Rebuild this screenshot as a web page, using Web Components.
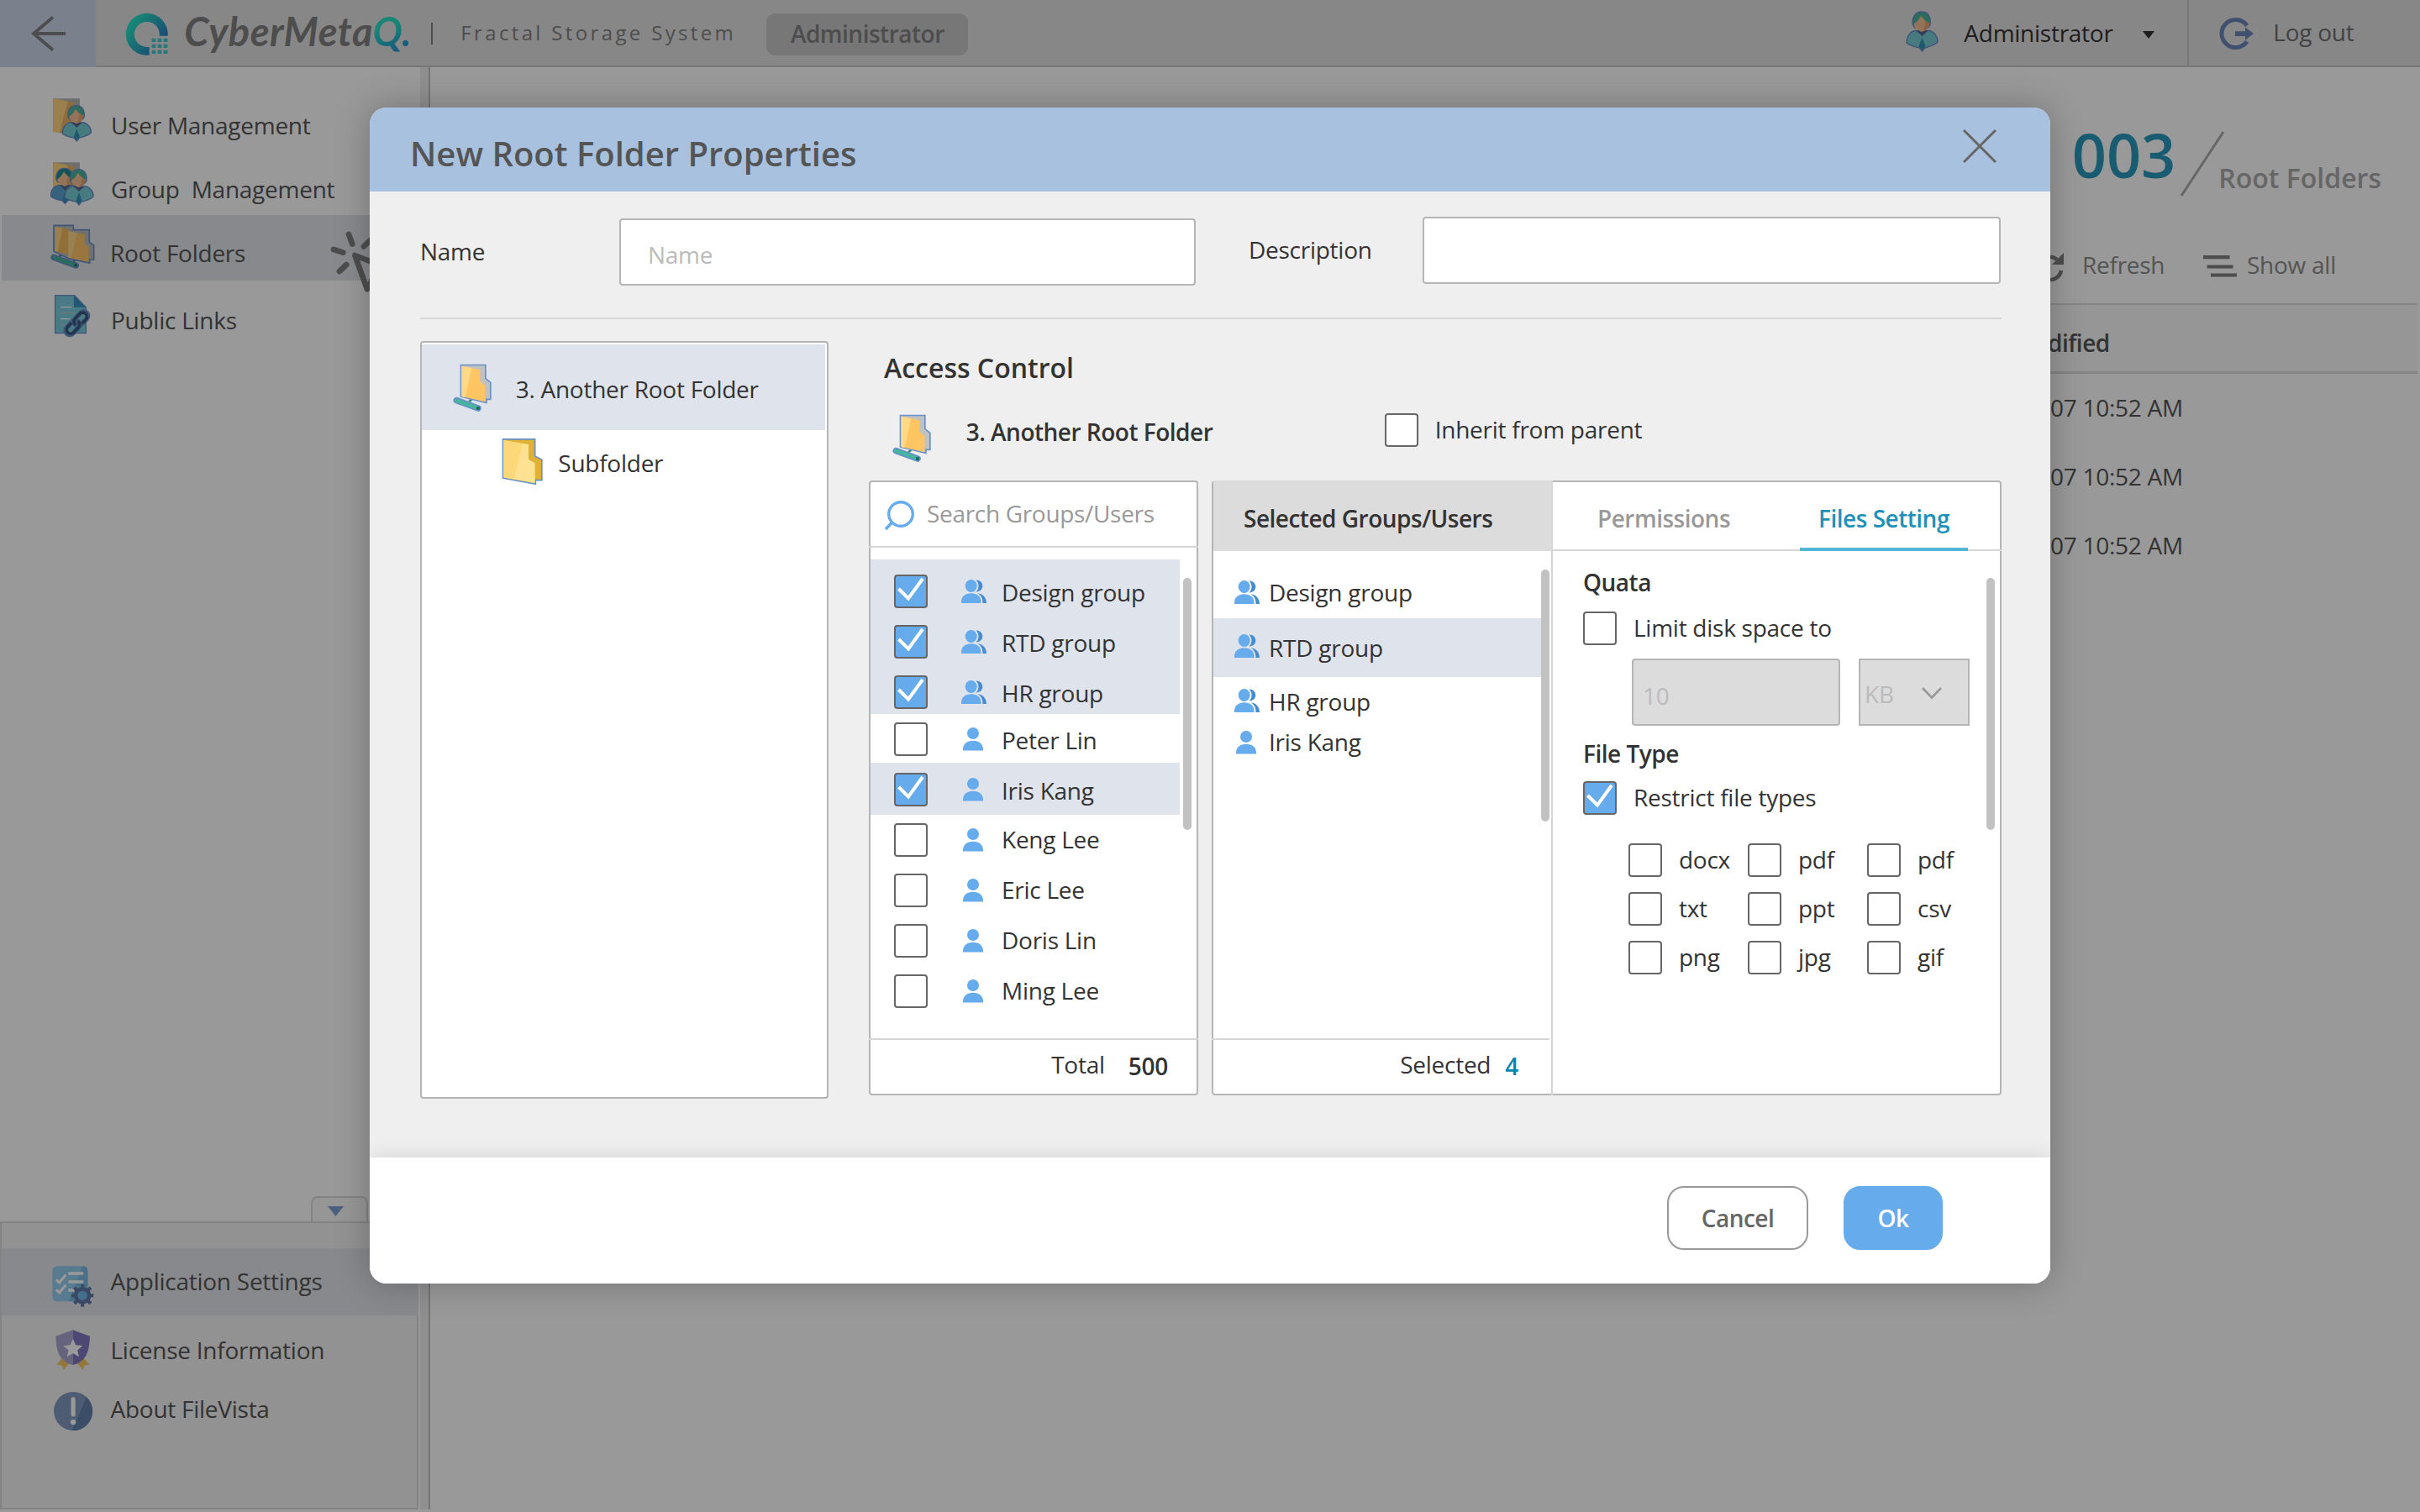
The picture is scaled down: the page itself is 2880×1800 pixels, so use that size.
<!DOCTYPE html>
<html lang="en">
<head>
<meta charset="utf-8">
<title>CyberMetaQ – Root Folders</title>
<style>
  html, body { margin: 0; padding: 0; }
  body { width: 2880px; height: 1800px; overflow: hidden; background: #fff; font-family: "Open Sans", "Noto Sans", sans-serif; font-size: 28px; line-height: 38px; letter-spacing: -.26px; color: #333; }
</style>
</head>
<body>
<app-shell>
  <top-bar slot="top"></top-bar>
  <side-nav slot="side"></side-nav>
  <root-content slot="main"></root-content>
  <props-dialog slot="dialog" heading="New Root Folder Properties"></props-dialog>
</app-shell>

<script>
const person = (dx, dy, body, hair) => `
  <g transform="translate(${dx} ${dy})">
    <path d="M223 207C223 184 236 170 252 167L274 180L296 167C313 170 326 186 325 205C312 216 292 220 283 223L274 234L265 223C250 220 232 216 223 207z" fill="${body}" stroke="#6b8fc9" stroke-width="4" stroke-linejoin="round"/>
    <path d="M255 166L274 186L293 166z" fill="#56688f"/>
    <path d="M274 190L285 218L274 231L263 218z" fill="#3595bb"/>
    <path d="M243 148C240 121 254 107 272 107C292 107 305 122 300 150L293 158H250z" fill="${hair}" stroke="#6b8fc9" stroke-width="4"/>
    <path d="M247 146C256 140 264 132 270 119C278 131 287 139 298 143C299 153 292 160 286 166L272 172L256 163C249 158 247 152 247 146z" fill="#f5c096"/>
    <path d="M284 137L298 143C299 153 292 160 286 166L278 170z" fill="#e8a378"/>
  </g>`;
const backFolder = (y) => `
  <g transform="translate(0 ${y})">
    <path d="M190 82H285V190H190z" fill="#b8b8b8"/>
    <path d="M190 82L266 96V214L190 200z" fill="#e9b265"/>
    <path d="M190 82L243 92L212 204L190 200z" fill="#ffd580"/>
  </g>`;

/* name: [viewBox, width, height, markup] */
const ICONS = {
  back: ['0 0 42 42', 42, 42, `<path d="M26 1.500L3 21L26 40.500M2 21H41" fill="none" stroke="#808080" stroke-width="3.800"/>`],
  logo: ['448 46 154 154', 51.33, 51.33, `
    <defs><linearGradient id="g" gradientUnits="userSpaceOnUse" x1="470" y1="90" x2="570" y2="160"><stop offset="0" stop-color="#28e0c6"/><stop offset=".45" stop-color="#2cb5c2"/><stop offset="1" stop-color="#2a82c4"/></linearGradient></defs>
    <path d="M600 129A75 75 0 1 0 534 198V168A45 45 0 1 1 570 129z" fill="url(#g)"/>
    <path d="M543 138h14v13h-14zM564 138h14v13h-14zM585 138h14v13h-14zM543 159h14v13h-14zM564 159h14v13h-14zM585 159h14v13h-14zM543 180h14v13h-14zM564 180h14v13h-14zM585 180h14v13h-14z" fill="#45c6cd"/>`],
  avatar: ['220 104 108 134', 39, 49.5, person(0, 0, '#79cdd6', '#4bb39b')],
  logout: ['0 0 42 38', 42, 38, `<path d="M34 9.500A16.500 16.500 0 1 0 34 28.500" fill="none" stroke="#6c87b9" stroke-width="5"/><path d="M20 16.200H32V11.500L42 19L32 26.800V22H20z" fill="#6c87b9"/>`],
  user: ['186 78 144 162', 48, 54, backFolder(0) + person(0, 0, '#79cdd6', '#4bb39b')],
  group: ['180 306 156 162', 52, 54, backFolder(228) + person(-42, 224, '#5aa4cf', '#1f8a8f') + person(8, 228, '#79cdd6', '#4bb39b')],
  roots: ['176 528 160 162', 53.33, 54, `
    <path d="M207 648L226 630M252 672L268 654" stroke="#2b8a7a" stroke-width="7"/>
    <path d="M188 535H258V551H315V595L331 606V657H316V670L240 653L188 628z" fill="#bcbcbc" stroke="#6b8fc9" stroke-width="5"/>
    <path d="M192 540L242 548V640L192 627z" fill="#f2bb5c"/><path d="M192 540L219 545L201 629L192 627z" fill="#ffd580"/>
    <path d="M240 555L298 568V602L313 612V665L240 650z" fill="#ffc566"/><path d="M240 555L270 562L250 652L240 650z" fill="#ffd890"/>
    <path d="M188 649L267 678" stroke="#6b8fc9" stroke-width="22" stroke-linecap="round"/><path d="M188 649L267 678" stroke="#46b59d" stroke-width="12" stroke-linecap="round"/><circle cx="266" cy="677" r="5" fill="#1a6b5e"/>`],
  link: ['192 780 132 156', 44, 52, `
    <path d="M197 785H266L307 828V920H197z" fill="#79cdda" stroke="#6b8fc9" stroke-width="4"/><path d="M264 786V827H306z" fill="#3a93c4"/>
    <path d="M216 827H256M216 869H250" stroke="#fff" stroke-width="4"/><path d="M216 848H270M216 890H236" stroke="#b9c2c6" stroke-width="4"/>
    <g fill="none" stroke="#6b8fc9" stroke-width="17"><rect x="-29" y="-15" width="58" height="30" rx="15" transform="translate(289 868) rotate(-47)"/><rect x="-29" y="-15" width="58" height="30" rx="15" transform="translate(259 900) rotate(-47)"/></g>
    <g fill="none" stroke="#38597f" stroke-width="10.500"><path d="M-7 15H12A15 15 0 0 0 12 -15H-12A15 15 0 0 0 -27 2" transform="translate(287 870) rotate(-47)"/><path d="M7 -15H-12A15 15 0 0 0 -12 15H12A15 15 0 0 0 27 -2" transform="translate(261 898) rotate(-47)"/></g>`],
  click: ['1180 556 222 222', 74, 74, `<g fill="none" stroke="#808080" stroke-width="20" stroke-linecap="round" stroke-linejoin="round"><path d="M1246 568L1259 603M1192 622L1226 633M1238 676L1213 700M1300 611L1326 586"/><path d="M1268 643L1312 764L1336 716L1388 690z"/></g>`],
  settings: ['176 378 150 152', 51.65, 50.67, `
    <rect x="180" y="382" width="122" height="126" rx="16" fill="#93cdf0"/><path d="M286 382Q302 384 302 398V492Q302 508 286 508H236z" fill="#7db9e0"/>
    <path d="M193 430L204 441L226 413M193 466L204 477L226 449" fill="none" stroke="#fff" stroke-width="9"/><path d="M235 408H287M235 438H287M235 468H256" stroke="#fff" stroke-width="10"/>
    <g fill="#5f7aa8"><circle cx="284" cy="487" r="30"/><rect x="278" y="447" width="12" height="80"/><rect x="246" y="481" width="76" height="12"/><rect x="278" y="447" width="12" height="80" transform="rotate(45 284 487)"/><rect x="278" y="447" width="12" height="80" transform="rotate(-45 284 487)"/></g><circle cx="284" cy="487" r="17" fill="#72b8e8"/>`],
  license: ['188 607 126 150', 43.4, 50, `
    <path d="M215 710L195 735L212 737L219 753L238 731zM288 710L309 735L292 737L286 753L266 731z" fill="#f2c765"/>
    <path d="M251 611L192 633C193 690 206 723 251 736z" fill="#a9a6d0"/><path d="M251 611L310 633C308 690 296 723 251 736z" fill="#8078c0"/>
    <path d="M251.500 642L261 665L285 667L267 683L272 707L251.500 694L231 707L236 683L218 667L242 665z" fill="#fff"/>`],
  about: ['180 828 140 144', 48.2, 48, `
    <ellipse cx="250" cy="900" rx="67" ry="69" fill="#8099bf"/><path d="M296 850A67 69 0 0 1 246 969z" fill="#6480ad"/><path d="M250 857V912" stroke="#fff" stroke-width="15" stroke-linecap="round"/><ellipse cx="250" cy="939" rx="9.500" ry="9.500" fill="#fff"/>`],
  refresh: ['0 0 34 34', 34, 34, `<path d="M26 8A13.500 13.500 0 1 0 31 21" fill="none" stroke="#808080" stroke-width="4.500"/><path d="M34 0V14H20z" fill="#808080"/>`],
  lines: ['0 0 40 27', 40, 27, `<path d="M0 2.200H31.500M4.500 13.500H35.500M9 23.500H40" stroke="#808080" stroke-width="4.200"/>`],
  slash: ['0 0 54 78', 54, 78, `<path d="M52 1L2 77" stroke="#aaa" stroke-width="3"/>`],
  root: ['118 99 140 172', 46.67, 57.33, `
    <path d="M172 239L190 221" stroke="#2b8a7a" stroke-width="8"/>
    <path d="M146.500 103.500H234.500V152L252.500 166V226H237.500V238L146.500 216z" fill="#c1c1c1" stroke="#6791c8" stroke-width="5"/>
    <path d="M149 107L215 121V163L233 177V235L149 216z" fill="#ffc563"/><path d="M149 107L185 115L162 219L149 216z" fill="#ffd986"/>
    <path d="M131 230L208 258" stroke="#6791c8" stroke-width="23" stroke-linecap="round"/><path d="M131 230L208 258" stroke="#46b59d" stroke-width="13" stroke-linecap="round"/><circle cx="208" cy="258" r="6.500" fill="#1d6a60"/>`],
  sub: ['292 364 148 172', 49.33, 57.33, `
    <path d="M296.500 369.500H411V430L435.500 443V516H413V530L296.500 508z" fill="#dfb135" stroke="#6791c8" stroke-width="5"/>
    <path d="M299 373L388 388V442L411 455V527L299 506z" fill="#fee292"/><path d="M299 373L367 385L335 513L299 506z" fill="#fdd879"/>`],
  close: ['0 0 40 40', 40, 40, `<path d="M1 1L39 39M39 1L1 39" stroke="#666" stroke-width="3"/>`],
  search: ['0 0 35 36', 35, 36, `<circle cx="19" cy="16" r="14.300" fill="none" stroke="#66abec" stroke-width="3.400"/><path d="M8.500 26L1 34" stroke="#66abec" stroke-width="3.400"/>`],
  people: ['0 0 30 28', 30, 28, `<path d="M17.500 .4C22 .2 25.300 3.500 25.300 7.500S22 14.600 17.500 14.400C21.500 11 21.500 4 17.500 .4zM19.500 16.200C26.500 17 30 22 30 28H25.500C25.500 22 23.500 18.500 19.500 16.200z" fill="#458bd0"/><ellipse cx="11.700" cy="7.500" rx="7" ry="7.400" fill="#66abec"/><path d="M0 28V26.500C0 20 5 16.300 11.800 16.300S23.500 20 23.500 26.500V28z" fill="#66abec"/>`],
  one: ['-2 0 30 28', 30, 28, `<ellipse cx="12" cy="7" rx="7" ry="7" fill="#66abec"/><path d="M0 27.500V26C0 19.500 5 15.700 12 15.700S24 19.500 24 26V27.500z" fill="#66abec"/>`],
  chevron: ['0 0 24 15', 24, 15, `<path d="M1 1L12 12.500L23 1" fill="none" stroke="#999" stroke-width="2.600"/>`],
  caret: ['0 0 14 9', 14, 9, `<path d="M0 0H14L7 9z" fill="#333"/>`],
  caretBlue: ['0 0 19 12', 19, 12, `<path d="M0 0H19L9.500 12z" fill="#7fa2d5"/>`],
  tick: ['0 0 40 40', 40, 40, `<path d="M5.500 17L17 28.500L34 5" fill="none" stroke="#fff" stroke-width="4"/>`],
};

const define = (name, css, html) => customElements.define(name, class extends HTMLElement {
  connectedCallback() {
    if (this.shadowRoot) return;
    const root = this.attachShadow({ mode: 'open' });
    root.innerHTML = `<style>:host{display:block;box-sizing:border-box}*{box-sizing:border-box}${css}</style>` +
      (typeof html === 'function' ? html(this) : html);
  }
});

define('app-icon', ':host{display:block;flex:none;line-height:0}svg{display:block}', el => {
  const [box, w, h, body] = ICONS[el.getAttribute('name')];
  return `<svg viewBox="${box}" width="${w}" height="${h}" preserveAspectRatio="none">${body}</svg>`;
});

define('check-box', `
  :host{flex:none;width:40px;height:40px;border:2px solid #666;border-radius:4px;background:#fff;overflow:hidden}
  :host([checked]){background:#66abec}
  app-icon{margin:-2px}`,
  el => el.hasAttribute('checked') ? '<app-icon name="tick"></app-icon>' : '');

define('scroll-thumb', ':host{flex:none;width:10px;height:300px;border-radius:5px;background:#c2c2c2}', '');

define('app-shell', `
  :host{position:relative;display:grid;grid-template:80px 1720px / 512px 2368px;width:2880px;height:1800px;overflow:hidden}
  .top{grid-column:1/3}
  .veil{position:absolute;inset:0;background:rgba(0,0,0,.4);padding:128px 440px 272px}`,
  `<div class="top"><slot name="top"></slot></div><slot name="side"></slot><slot name="main"></slot>
   <div class="veil"><slot name="dialog"></slot></div>`);

define('top-bar', `
  :host{display:flex;height:80px;background:#e2e2e2}
  .back{width:114px;background:#cbd5e9;padding:19px 0 0 37px}
  .bar{flex:1;display:flex;border-bottom:2px solid #c6c6c6}
  .logo{margin:15px 0 0 35px}
  .brand{margin:0 0 0 19px;font:italic 700 47px/54px Lato,sans-serif;color:#808080;padding-top:10px;white-space:nowrap;height:76px;width:267px;letter-spacing:.45px}
  .brand b{font-weight:700;background:linear-gradient(160deg,#28e0c6 35%,#2a8ad0 80%);-webkit-background-clip:text;background-clip:text;color:transparent;padding:0 4px 8px 0}
  .sep{width:2px;height:26px;background:#808080;margin:27px 0 0 27px}
  .sys{margin:20px 0 0 33px;font-size:24px;line-height:38px;letter-spacing:3.35px;color:#808080;width:364px;white-space:nowrap}
  .badge{margin-top:16px;width:240px;height:50px;border-radius:10px;background:#c6c6c6;color:#808080;font-weight:600;letter-spacing:-.5px;text-align:center;line-height:48px}
  .avatar{margin:13px 0 0 1116px}
  .name{margin:20px 0 0 30px;width:213px;color:#333}
  .caret{margin-top:37px}
  .out{display:flex;border-left:2px solid #c6c6c6;margin-left:39px;padding-left:35px;color:#6f6f6f}
  .out app-icon{margin-top:21px}.out span{margin:19px 0 0 23px}`,
  `<div class="back"><app-icon name="back"></app-icon></div>
   <div class="bar"><app-icon class="logo" name="logo"></app-icon><div class="brand">CyberMeta<b>Q.</b></div><div class="sep"></div>
   <div class="sys">Fractal Storage System</div><div class="badge">Administrator</div>
   <app-icon class="avatar" name="avatar"></app-icon><div class="name">Administrator</div><app-icon class="caret" name="caret"></app-icon>
   <div class="out"><app-icon name="logout"></app-icon><span>Log out</span></div></div>`);

define('nav-item', `
  :host{display:flex;color:#555;white-space:pre}
  :host([active]){background:#e3e5ec}
  .ic{width:var(--iw,132px);display:flex;justify-content:center;padding:var(--iy) 6px 0 46px;flex:none}
  .tx{padding-top:var(--ty)}`,
  el => `<div class="ic"><app-icon name="${el.getAttribute('icon')}"></app-icon></div><div class="tx"><slot></slot></div>`);

define('side-nav', `
  :host{display:flex;height:1717px;border-right:2px solid #c4c4c4}
  .col{width:500px;display:flex;flex-direction:column}
  .strip{width:10px;background:#eee}
  .main{height:1344px;position:relative}
  .main nav-item[active]{border-left:2px solid #fff;--iw:129px}
  .click{position:absolute;left:393px;top:195px}
  .tab{align-self:flex-end;width:68px;height:32px;margin:0 62px -2px 0;border:2px solid #dadada;border-bottom:0;border-radius:8px 8px 0 0;background:#fbfbfb;padding:10px 0 0 18px}
  .panel{height:343px;width:498px;border:2px solid #dadada;background:#f3f3f3;padding-top:30px;--iw:129.500px}
  .panel nav-item[active]{margin-right:-2px}`,
  `<div class="col"><div class="main">
    <nav-item icon="user" style="height:76px;--iy:36px;--ty:50px">User Management</nav-item>
    <nav-item icon="group" style="height:100px;--iy:36px;--ty:50px">Group  Management</nav-item>
    <nav-item icon="roots" active style="height:78px;--iy:10px;--ty:26px">Root Folders</nav-item>
    <nav-item icon="link" style="height:78px;--iy:16px;--ty:28px">Public Links</nav-item>
    <app-icon class="click" name="click"></app-icon></div>
    <div class="tab"><app-icon name="caretBlue"></app-icon></div>
    <div class="panel">
      <nav-item icon="settings" active style="height:80px;--iy:20px;--ty:20px">Application Settings</nav-item>
      <nav-item icon="license" style="height:80px;--iy:16px;--ty:22px">License Information</nav-item>
      <nav-item icon="about" style="height:70px;--iy:10px;--ty:12px">About FileVista</nav-item>
    </div></div><div class="strip"></div>`);

define('root-content', `
  :host{width:2368px;height:1720px;color:#555}
  .sum{display:flex;justify-content:flex-end;height:190px;padding-right:46px;letter-spacing:0}
  .num{font-size:72px;line-height:98px;font-weight:600;color:#2a99bc;margin-top:55px}
  .sum app-icon{margin:76px 0 0 5px}
  .cap{font-size:32px;line-height:44px;font-weight:600;color:#aaa;margin:110px 0 0 -8px}
  .tools{display:flex;height:91px;padding-left:1910px;color:#8c8c8c}
  .tools span{padding-top:26px}
  .th{height:84px;width:2365px;border:2px solid #dcdcdc;border-width:2px 0 3px;background:#fafafa;font-weight:600;letter-spacing:-.5px;padding:26px 0 0 1925px}
  .td{padding:21px 0 0 1928px;height:82px}`,
  `<div class="sum"><div class="num">003</div><app-icon name="slash"></app-icon><div class="cap">Root Folders</div></div>
   <div class="tools"><app-icon name="refresh" style="margin:31px 22px 0 0"></app-icon><span style="width:144px">Refresh</span><app-icon name="lines" style="margin:34px 12px 0 0"></app-icon><span>Show all</span></div>
   <div class="th">dified</div><div class="td">07 10:52 AM</div><div class="td">07 10:52 AM</div><div class="td">07 10:52 AM</div>`);

define('text-field', `
  :host{height:80px;border:2px solid #b5b5b5;border-radius:4px;background:#fff;color:#bbb;padding:22px 0 0 32px}
  :host([disabled]){background:#dcdcdc}`, '<slot></slot>');

define('push-button', `
  :host{height:76px;border:2px solid #999;border-radius:20px;background:#fff;color:#666;font-weight:600;letter-spacing:-.5px;text-align:center;line-height:72px}
  :host([primary]){background:#66abec;border-color:#66abec;color:#fff}`, '<slot></slot>');

define('folder-tree', `
  :host{width:486px;height:902px;border:2px solid #b5b5b5;border-radius:4px;background:#fff;padding-top:2px}
  .row{display:flex}
  .sel{width:480px;height:102px;background:#dfe3eb;padding:23px 0 0 37px}
  .sel span{margin:11px 0 0 28px}
  .kid{padding:9px 0 0 95px}
  .kid span{margin:11px 0 0 18px}`,
  `<div class="row sel"><app-icon name="root"></app-icon><span>3. Another Root Folder</span></div>
   <div class="row kid"><app-icon name="sub"></app-icon><span>Subfolder</span></div>`);

define('person-row', `
  :host{display:flex;height:40px;padding-left:28px}
  app-icon{margin:6px 18px 0 40px}
  .tx{line-height:40px;margin-top:var(--dy,1px)}`,
  el => `<check-box ${el.hasAttribute('checked') ? 'checked' : ''}></check-box><app-icon name="${el.getAttribute('icon')}"></app-icon><div class="tx"><slot></slot></div>`);

define('group-picker', `
  :host{width:392px;height:732px;border:2px solid #b5b5b5;border-radius:4px;background:#fff;display:flex;flex-direction:column}
  .find{display:flex;height:78px;border-bottom:2px solid #d6d6d6;margin:0 -2px;padding:22px 0 0 19px;color:#999;letter-spacing:-.32px}
  .find span{margin:-4px 0 0 15px}
  .body{display:flex;height:584px;padding-top:14px}
  .list{width:368px;margin-right:4px}
  .band{display:flex;flex-direction:column;gap:20px}
  .on{background:#dfe3eb}
  .sum{border-top:2px solid #d6d6d6;margin:0 -2px;display:flex;justify-content:flex-end;padding:10px 36px 0 0;height:66px}
  .sum b{font-weight:600;margin:2px 0 0 28px}`,
  `<div class="find"><app-icon name="search"></app-icon><span>Search Groups/Users</span></div>
   <div class="body"><div class="list">
     <div class="band on" style="padding:18px 0 6px"><person-row icon="people" checked>Design group</person-row><person-row icon="people" checked>RTD group</person-row><person-row icon="people" checked>HR group</person-row></div>
     <div class="band" style="padding:10px 0 8px"><person-row icon="one">Peter Lin</person-row></div>
     <div class="band on" style="padding:12px 0 10px"><person-row icon="one" checked>Iris Kang</person-row></div>
     <div class="band" style="padding-top:10px;--dy:-1px"><person-row icon="one">Keng Lee</person-row><person-row icon="one">Eric Lee</person-row><person-row icon="one">Doris Lin</person-row><person-row icon="one">Ming Lee</person-row></div>
   </div><scroll-thumb style="margin-top:22px"></scroll-thumb></div>
   <div class="sum"><span>Total</span><b>500</b></div>`);

define('member-row', `
  :host{display:flex;padding-left:25px}
  :host([active]){background:#dfe3eb}
  app-icon{margin:var(--iy) 11px 0 0}.tx{line-height:40px;margin-top:var(--ty)}`,
  el => `<app-icon name="${el.getAttribute('icon')}"></app-icon><div class="tx"><slot></slot></div>`);

define('selected-list', `
  :host{width:402px;flex:none;height:732px;margin-top:-2px;display:flex;flex-direction:column}
  .hd{height:84px;background:#dcdcdc;font-weight:600;letter-spacing:-.5px;padding:26px 0 0 36px}
  .body{display:flex;height:580px}
  .list{width:390px}
  .sum{border-top:2px solid #d6d6d6;margin:0 2px 0 -2px;display:flex;justify-content:flex-end;padding:10px 37px 0 0;height:66px}
  .sum b{font-weight:600;color:#0086b0;margin:2px 0 0 17px}`,
  `<div class="hd">Selected Groups/Users</div>
   <div class="body"><div class="list">
     <member-row icon="people" style="height:80px;--iy:35px;--ty:29px">Design group</member-row>
     <member-row icon="people" active style="height:70px;--iy:19px;--ty:15px">RTD group</member-row>
     <member-row icon="people" style="height:54px;--iy:14px;--ty:9px">HR group</member-row>
     <member-row icon="one" style="height:54px;--iy:10px;--ty:3px">Iris Kang</member-row>
   </div><scroll-thumb style="margin-top:22px"></scroll-thumb></div>
   <div class="sum"><span>Selected</span><b>4</b></div>`);

define('file-settings', `
  :host{flex:1;height:732px;margin-top:-2px;border-left:2px solid #d6d6d6}
  .tabs{display:flex;height:84px;margin-right:-2px;padding-top:2px;border-bottom:2px solid #d6d6d6;font-weight:600;letter-spacing:-.5px;color:#999}
  .tabs div{padding-top:24px;text-align:center}
  .tabs .p{margin-left:32px;width:200px}
  .tabs .f{width:200px;height:82px;margin-left:62px;color:#1f91b8;border-bottom:4px solid #53b6d6}
  .body{display:flex;justify-content:space-between;padding-right:6px}
  .form{padding:18px 0 0 36px}
  b{display:block;font-weight:600;letter-spacing:-.5px}
  .line{display:flex}
  .line span{margin:0 0 0 20px}
  .quota{display:flex;gap:22px;padding:16px 0 0 58px}
  .unit{border:2px solid #b5b5b5;background:#dcdcdc;width:132px;height:80px;display:flex;color:#bbb;padding:21px 0 0 5px}
  .unit app-icon{margin:11px 0 0 33px}
  .types{display:grid;grid-template-columns:142px 142px 142px;grid-auto-rows:40px;row-gap:18px;padding:34px 0 0 54px}`,
  () => `<div class="tabs"><div class="p">Permissions</div><div class="f">Files Setting</div></div>
   <div class="body"><div class="form">
     <b style="height:54px">Quata</b>
     <div class="line"><check-box></check-box><span>Limit disk space to</span></div>
     <div class="quota"><text-field disabled style="width:248px;padding:23px 0 0 11px">10</text-field><div class="unit"><span>KB</span><app-icon name="chevron"></app-icon></div></div>
     <b style="padding-top:14px;height:66px">File Type</b>
     <div class="line"><check-box checked></check-box><span>Restrict file types</span></div>
     <div class="types">${['docx', 'pdf', 'pdf', 'txt', 'ppt', 'csv', 'png', 'jpg', 'gif'].map(t => `<div class="line"><check-box></check-box><span>${t}</span></div>`).join('')}</div>
   </div><scroll-thumb style="margin-top:32px"></scroll-thumb></div>`);

define('props-dialog', `
  :host{width:2000px;height:1400px;border-radius:20px;overflow:hidden;background:#efefef;box-shadow:0 0 40px rgba(0,0,0,.25);display:flex;flex-direction:column}
  header{display:flex;justify-content:space-between;height:100px;background:#a7c1de;padding:26px 64px 0 48px;font-size:40px;line-height:56px;font-weight:600;letter-spacing:0;color:#555}
  header span{padding-top:1px}
  main{height:1150px;padding:30px 58px 0 60px}
  .fields{display:flex;height:122px;border-bottom:2px solid #d6d6d6}
  .cols{display:flex;padding-top:26px}
  .access{margin-left:48px;width:1348px}
  h2{margin:10px 0 0 18px;font-size:32px;line-height:44px;font-weight:600;letter-spacing:0;height:44px}
  .owner{display:flex;padding:33px 0 0 28px;height:112px}
  .owner b{font-weight:600;letter-spacing:-.5px;margin:2px 0 0 41px;width:498px}
  .owner check-box{margin-top:-1px}
  .owner span{margin:-1px 0 0 20px}
  .panes{display:flex;gap:16px}
  .duo{display:flex;width:940px;height:732px;border:2px solid #b5b5b5;border-radius:4px;background:#fff}
  footer{height:150px;background:#fff;display:flex;gap:42px;padding:34px 128px 0 0;justify-content:flex-end;box-shadow:0 0 24px rgba(0,0,0,.12)}`,
  el => `<header><span>${el.getAttribute('heading')}</span><app-icon name="close"></app-icon></header>
   <main>
     <div class="fields"><span style="width:237px;padding-top:22px">Name</span><text-field style="width:686px;margin-top:2px">Name</text-field>
       <span style="width:207px;margin-left:63px;padding-top:20px">Description</span><text-field style="width:688px"></text-field></div>
     <div class="cols"><folder-tree></folder-tree>
       <div class="access"><h2>Access Control</h2>
         <div class="owner"><app-icon name="root"></app-icon><b>3. Another Root Folder</b><check-box></check-box><span>Inherit from parent</span></div>
         <div class="panes"><group-picker></group-picker><div class="duo"><selected-list></selected-list><file-settings></file-settings></div></div>
       </div></div>
   </main>
   <footer><push-button style="width:168px">Cancel</push-button><push-button primary style="width:118px">Ok</push-button></footer>`);
</script>
</body>
</html>
